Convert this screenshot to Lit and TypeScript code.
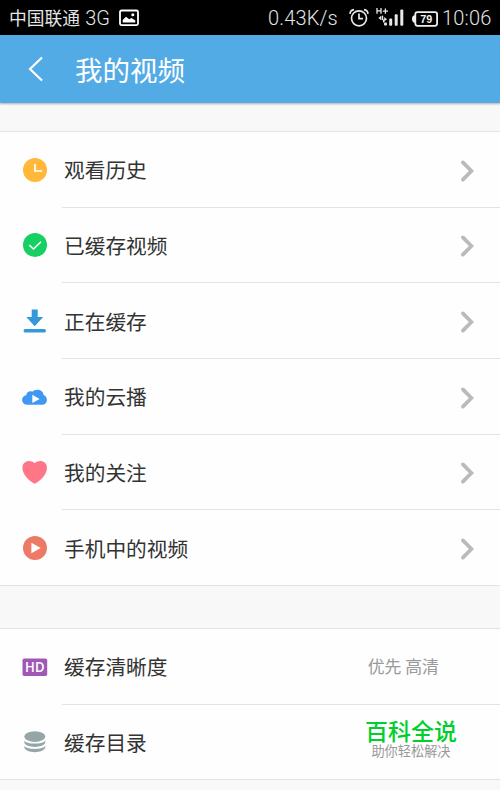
import { LitElement, html, css, svg } from "lit";
import { customElement, property } from "lit/decorators.js";

const icons: Record<string, unknown> = {
  history: svg`<circle cx="14" cy="14" r="12" fill="#ffb83a"/><path d="M14 7.9V15H21" fill="none" stroke="#fff" stroke-width="1.7"/>`,
  cached: svg`<circle cx="14" cy="14" r="12" fill="#16d064"/><path d="M8.3 14.2L12.5 18L20 10.7" fill="none" stroke="#fff" stroke-width="1.6"/>`,
  download: svg`<path d="M10.7 2.5H16.7V10H22.2L13.7 19.3L5.3 10H10.7Z" fill="#3498db"/><rect x="2.6" y="22" width="22.3" height="3.4" rx="1.5" fill="#3498db"/>`,
  cloud: svg`<path d="M6.5 21.7A4.7 4.7 0 0 1 5.2 12.2C5.8 8.6 9 7.7 11.2 8.8C14.5 5 22.2 6.4 22.6 12C27.3 13.6 27 21.4 21.8 21.7Z" fill="#4098f2"/><path d="M11.3 11.8V20L18.6 15.9Z" fill="#fff"/>`,
  heart: svg`<path d="M13.7 25.8C10.5 24.3 1.4 18 1.4 9.8C1.4 2.6 9.3 1.2 13.7 5C18.1 1.2 26 2.6 26 9.8C26 18 17 24.3 13.7 25.8Z" fill="#ff7786"/>`,
  local: svg`<circle cx="14" cy="14" r="12" fill="#ec7a66"/><path d="M10.4 8.7V19.3L19.7 14Z" fill="#fff"/>`,
  hd: svg`<rect x="1.5" y="5.5" width="24.7" height="17.5" rx="1.7" fill="#9f58b6"/><text x="13.8" y="19.3" text-anchor="middle" fill="#fff" font-family="Open Sans, sans-serif" font-weight="600" font-size="14" textLength="19.4" lengthAdjust="spacingAndGlyphs">HD</text>`,
  disk: svg`<g fill="#96a5a6"><ellipse cx="13.8" cy="8.6" rx="10.5" ry="5.3"/><path d="M3.3 12.4C5.4 16.6 22.2 16.6 24.3 12.4V14.6C22.5 20.4 5.1 20.4 3.3 14.6Z"/><path d="M3.3 17.8C5.4 22 22.2 22 24.3 17.8V19.6C22.5 25.8 5.1 25.8 3.3 19.6Z"/></g>`,
};

@customElement("video-row")
class VideoRow extends LitElement {
  @property() icon = "";
  @property() label = "";
  @property({ type: Boolean }) arrow = false;

  static styles = css`
    :host { display: flex; height: 75.67px; box-sizing: border-box; padding-left: 20.5px; }
    :host([last]) { height: 74.6px; }
    .icon { width: 28px; height: 28px; flex: none; margin-top: 23.6px; }
    .body { flex: 1; margin-left: 13.5px; display: flex; align-items: center; box-sizing: border-box;
      border-bottom: 1px solid #e3e3e3; padding: 0 24.5px 0 2px; }
    :host([last]) .body { border-bottom: 0; }
    .label { flex: 1; font-size: 20.7px; line-height: 30px; color: #333; white-space: nowrap; }
    .arrow { width: 18px; height: 24px; margin-top: 3px; }
  `;

  render() {
    return html`<svg class="icon" viewBox="0 0 28 28">${icons[this.icon]}</svg>
      <div class="body">
        <span class="label">${this.label}</span>
        ${this.arrow
          ? html`<svg class="arrow" viewBox="0 0 18 24"><path d="M4.9 3.4L13.4 12L4.9 20.6" fill="none" stroke="#bababa" stroke-width="3.7" stroke-linecap="round"/></svg>`
          : html`<slot></slot>`}
      </div>`;
  }
}

@customElement("app-root")
class AppRoot extends LitElement {
  static styles = css`
    :host { display: block; height: 790px; overflow: hidden; background: #f8f8f8;
      font-family: "Noto Sans CJK SC", sans-serif; }
    .status { height: 35px; background: #000; color: #e4e4e4; display: flex; align-items: center;
      box-sizing: border-box; padding: 1px 8.5px 0 9px; font: 300 20px "Roboto", sans-serif; }
    .carrier { font: 400 17.8px/26px "Noto Sans CJK SC", sans-serif; white-space: nowrap; margin-top: -3px; }
    .net { margin-left: 5px; }
    .photo { width: 20px; height: 18px; margin-left: 9px; }
    .speed { margin-left: auto; letter-spacing: .15px; }
    .alarm { width: 20px; height: 20px; margin-left: 11px; }
    .signal { width: 28px; height: 22px; margin-left: 7px; }
    .battery { width: 26px; height: 16px; margin: 1px 4px 0 8px; }
    .clock { letter-spacing: .2px; }
    header { height: 68px; background: #53abe6; display: flex; align-items: center; color: #fff;
      box-shadow: 0 1px 2px rgba(0, 0, 0, .3); }
    .back { width: 18px; height: 26px; margin-left: 27px; }
    h1 { margin: 0 0 0 30px; font-size: 27.5px; line-height: 40px; font-weight: 400; }
    section { border: solid #e3e3e3; border-width: 1px 0; box-sizing: border-box; background: #fefefe; }
    .main { margin-top: 28px; height: 455px; }
    .settings { margin-top: 42px; height: 152px; }
    .value { font-size: 16.9px; line-height: 24px; color: #999; margin-right: 36.5px; }
    .brand { text-align: center; margin: -7px 18.5px 0 0; }
    .name { font-size: 23px; line-height: 26px; font-weight: 500; color: #00cf2d; }
    .tag { font-size: 13.2px; line-height: 16px; color: #999; }
  `;

  render() {
    const rows = [
      ["history", "观看历史"], ["cached", "已缓存视频"], ["download", "正在缓存"],
      ["cloud", "我的云播"], ["heart", "我的关注"], ["local", "手机中的视频"],
    ];
    return html`
      <div class="status">
        <span class="carrier">中国联通</span><span class="net">3G</span>
        <svg class="photo" viewBox="0 0 20 18"><rect x="1" y="1.5" width="18" height="14.6" rx="1.5" fill="none" stroke="#fff" stroke-width="1.8"/><path d="M3.7 13.5V11L7 7.8L10.2 10.2L12.5 9L16.3 11.5V13.5Z" fill="#fff"/><circle cx="13.8" cy="5.8" r="1.5" fill="#fff"/></svg>
        <span class="speed">0.43K/s</span>
        <svg class="alarm" viewBox="0 0 20 20" fill="none" stroke="#e8e8e8" stroke-width="1.7"><circle cx="10" cy="10.3" r="7.5"/><path d="M10 5.5V10.7H14M1 5.8C1.2 3.6 2.5 2 5 1.6M19 5.8C18.8 3.6 17.5 2 15 1.6"/></svg>
        <svg class="signal" viewBox="0 0 28 22" fill="#e8e8e8"><path d="M1 1V6.8M5 1V6.8M1 3.9H5M6.8 4.2H12M9.4 1.6V6.8" fill="none" stroke="#e8e8e8" stroke-width="1.3"/><path d="M2.4 11L5.2 8.7V13.3ZM11 12.3L8.2 10V14.6Z"/><rect x="5.7" y="8.7" width="1.5" height="4.5"/><rect x="7" y="12.5" width="1.5" height="3"/><rect x="8" y="15.5" width="3" height="3" rx="1"/><rect x="13.2" y="11.5" width="3" height="7.3" rx="1"/><rect x="18.7" y="7.3" width="3" height="11.5" rx="1"/><rect x="24.3" y="2.5" width="3" height="16.3" rx="1"/></svg>
        <svg class="battery" viewBox="0 0 26 16"><rect x="3.3" y="1.2" width="21.8" height="13.6" rx="2.2" fill="none" stroke="#f0f0f0" stroke-width="1.8"/><path d="M3 4.5H1.4Q0 5 0 8T1.4 11.5H3Z" fill="#f0f0f0"/><text x="14.2" y="11.9" text-anchor="middle" fill="#f0f0f0" font-family="Liberation Sans, sans-serif" font-weight="700" font-size="11" textLength="12" lengthAdjust="spacingAndGlyphs">79</text></svg>
        <span class="clock">10:06</span>
      </div>
      <header>
        <svg class="back" viewBox="0 0 18 26"><path d="M15 1.5L3 13L15 24.5" fill="none" stroke="#fff" stroke-width="2.2"/></svg>
        <h1>我的视频</h1>
      </header>
      <section class="main">
        ${rows.map(([i, l], n) => html`<video-row icon=${i} label=${l} arrow ?last=${n === 5}></video-row>`)}
      </section>
      <section class="settings">
        <video-row icon="hd" label="缓存清晰度"><span class="value">优先 高清</span></video-row>
        <video-row icon="disk" label="缓存目录" last>
          <div class="brand"><div class="name">百科全说</div><div class="tag">助你轻松解决</div></div>
        </video-row>
      </section>`;
  }
}
